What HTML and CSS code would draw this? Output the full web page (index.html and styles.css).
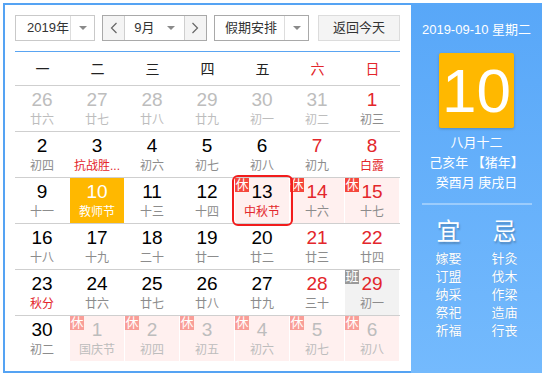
FILE: index.html
```html
<!DOCTYPE html>
<html lang="zh-CN">
<head>
<meta charset="utf-8">
<title>日历</title>
<link rel="stylesheet" href="styles.css">
</head>
<body>
<div class="cal">
  <div class="main">
    <div class="toolbar">
      <div class="sel year"><span class="val">2019年</span><span class="arr"><i class="tri"></i></span></div>
      <div class="month">
        <span class="nav"><svg width="8" height="12" viewBox="0 0 8 12"><polyline points="6.5,1 1.5,6 6.5,11" fill="none" stroke="#666" stroke-width="1.2"/></svg></span>
        <span class="mid"><span class="val">9月</span><span class="arr"><i class="tri"></i></span></span>
        <span class="nav"><svg width="8" height="12" viewBox="0 0 8 12"><polyline points="1.5,1 6.5,6 1.5,11" fill="none" stroke="#666" stroke-width="1.2"/></svg></span>
      </div>
      <div class="sel hol"><span class="val">假期安排</span><span class="arr"><i class="tri"></i></span></div>
      <div class="today">返回今天</div>
    </div>
    <div class="rule"></div>
    <div class="week">
      <span>一</span><span>二</span><span>三</span><span>四</span><span>五</span><span class="red">六</span><span class="red">日</span>
    </div>
    <div class="row">
      <div class="cell other"><b>26</b><i>廿六</i></div>
      <div class="cell other"><b>27</b><i>廿七</i></div>
      <div class="cell other"><b>28</b><i>廿八</i></div>
      <div class="cell other"><b>29</b><i>廿九</i></div>
      <div class="cell other"><b>30</b><i>初一</i></div>
      <div class="cell other"><b>31</b><i>初二</i></div>
      <div class="cell wk"><b>1</b><i>初三</i></div>
    </div>
    <div class="row">
      <div class="cell"><b>2</b><i>初四</i></div>
      <div class="cell"><b>3</b><i class="fest">抗战胜...</i></div>
      <div class="cell"><b>4</b><i>初六</i></div>
      <div class="cell"><b>5</b><i>初七</i></div>
      <div class="cell"><b>6</b><i>初八</i></div>
      <div class="cell wk"><b>7</b><i>初九</i></div>
      <div class="cell wk"><b>8</b><i class="fest">白露</i></div>
    </div>
    <div class="row">
      <div class="cell"><b>9</b><i>十一</i></div>
      <div class="cell today-cell"><b>10</b><i>教师节</i></div>
      <div class="cell"><b>11</b><i>十三</i></div>
      <div class="cell"><b>12</b><i>十四</i></div>
      <div class="cell rest picked"><span class="badge">休</span><b>13</b><i class="fest">中秋节</i></div>
      <div class="cell rest wk"><span class="badge">休</span><b>14</b><i>十六</i></div>
      <div class="cell rest wk"><span class="badge">休</span><b>15</b><i>十七</i></div>
    </div>
    <div class="row">
      <div class="cell"><b>16</b><i>十八</i></div>
      <div class="cell"><b>17</b><i>十九</i></div>
      <div class="cell"><b>18</b><i>二十</i></div>
      <div class="cell"><b>19</b><i>廿一</i></div>
      <div class="cell"><b>20</b><i>廿二</i></div>
      <div class="cell wk"><b>21</b><i>廿三</i></div>
      <div class="cell wk"><b>22</b><i>廿四</i></div>
    </div>
    <div class="row">
      <div class="cell"><b>23</b><i class="fest">秋分</i></div>
      <div class="cell"><b>24</b><i>廿六</i></div>
      <div class="cell"><b>25</b><i>廿七</i></div>
      <div class="cell"><b>26</b><i>廿八</i></div>
      <div class="cell"><b>27</b><i>廿九</i></div>
      <div class="cell wk"><b>28</b><i>三十</i></div>
      <div class="cell work wk"><span class="badge gray">班</span><b>29</b><i>初一</i></div>
    </div>
    <div class="row last">
      <div class="cell"><b>30</b><i>初二</i></div>
      <div class="cell rest other"><span class="badge">休</span><b>1</b><i>国庆节</i></div>
      <div class="cell rest other"><span class="badge">休</span><b>2</b><i>初四</i></div>
      <div class="cell rest other"><span class="badge">休</span><b>3</b><i>初五</i></div>
      <div class="cell rest other"><span class="badge">休</span><b>4</b><i>初六</i></div>
      <div class="cell rest other"><span class="badge">休</span><b>5</b><i>初七</i></div>
      <div class="cell rest other"><span class="badge">休</span><b>6</b><i>初八</i></div>
    </div>
  </div>
  <aside class="side">
    <div class="date">2019-09-10 星期二</div>
    <div class="big">10</div>
    <div class="lunar">八月十二</div>
    <div class="lunar">己亥年 【猪年】</div>
    <div class="lunar">癸酉月 庚戌日</div>
    <div class="sep"></div>
    <div class="yiji">
      <div class="col">
        <div class="head">宜</div>
        <div>嫁娶</div><div>订盟</div><div>纳采</div><div>祭祀</div><div>祈福</div>
      </div>
      <div class="col">
        <div class="head">忌</div>
        <div>针灸</div><div>伐木</div><div>作梁</div><div>造庙</div><div>行丧</div>
      </div>
    </div>
  </aside>
</div>
</body>
</html>
```
FILE: styles.css
```css
html, body {
  margin: 0;
  padding: 0;
  background: #fff;
}
body {
  font-family: "Liberation Sans", "Noto Sans CJK SC", sans-serif;
  color: #333;
}
.cal {
  margin: 3px;
  width: 539px;
  height: 370px;
  box-sizing: border-box;
  border: 2px solid #55a3f3;
  display: flex;
}
.main {
  width: 406px;
  box-sizing: border-box;
  padding: 10px 11px 10px 10px;
  background: #fff;
}
.toolbar {
  display: flex;
  height: 26px;
  font-size: 13px;
  color: #333;
}
.sel {
  display: flex;
  box-sizing: border-box;
  height: 26px;
  border: 1px solid #c9c9c9;
  background: #fff;
}
.sel .val, .mid .val {
  flex: 1;
  display: flex;
  align-items: center;
  padding-left: 11px;
  line-height: 24px;
}
.sel .arr, .mid .arr {
  width: 24px;
  box-sizing: border-box;
  border-left: 1px solid #ddd;
  display: flex;
  align-items: center;
  justify-content: center;
}
.mid .arr {
  border-left: 0;
  width: 26px;
}
.tri {
  display: block;
  width: 0;
  height: 0;
  border-left: 4px solid transparent;
  border-right: 4px solid transparent;
  border-top: 4px solid #8a8a8a;
}
.year { width: 80px; }
.month {
  margin-left: 7px;
  width: 105px;
  height: 26px;
  box-sizing: border-box;
  border: 1px solid #a9a9a9;
  display: flex;
}
.nav {
  width: 22px;
  background: #f4f4f4;
  display: flex;
  align-items: center;
  justify-content: center;
}
.mid {
  width: 60px;
  display: flex;
  border-left: 1px solid #cfcfcf;
  border-right: 1px solid #cfcfcf;
  background: #fff;
}
.mid .val { padding-left: 9px; }
.hol {
  margin-left: 7px;
  width: 95px;
  border-color: #a9a9a9;
}
.hol .val { padding-left: 10px; }
.today {
  margin-left: 9px;
  width: 82px;
  box-sizing: border-box;
  border: 1px solid #dcdcdc;
  background: #f4f4f4;
  text-align: center;
  line-height: 24px;
}
.rule {
  margin-top: 10px;
  height: 1px;
  background: #5aa5f2;
}
.week {
  display: grid;
  grid-template-columns: repeat(7, 55px);
  height: 34px;
  box-sizing: border-box;
  border-bottom: 1px solid #cfcfcf;
  align-items: center;
  text-align: center;
  font-size: 14px;
  color: #222;
  line-height: 16px;
  padding-top: 1px;
}
.week .red { color: #e3262b; }
.row {
  display: grid;
  grid-template-columns: repeat(7, 55px);
  height: 46px;
  box-sizing: border-box;
  border-bottom: 1px solid #cfcfcf;
}
.row.last {
  height: 45px;
  border-bottom: 0;
}
.cell {
  position: relative;
  box-sizing: border-box;
  border-right: 1px solid transparent;
  background-clip: padding-box;
  text-align: center;
}
.cell b {
  display: block;
  font-weight: normal;
  font-size: 19px;
  line-height: 20px;
  padding-top: 4px;
  color: #000;
  font-family: "Liberation Sans", sans-serif;
}
.cell i {
  display: block;
  font-style: normal;
  font-size: 12px;
  line-height: 14px;
  margin-top: 3px;
  color: #8c8c8c;
  white-space: nowrap;
}
.cell i.fest { color: #e3262b; }
.cell.wk b { color: #e3262b; }
.cell.other b, .cell.other i { color: #bdbdbd; }
.cell.rest { background-color: #fff0ef; }
.cell.work { background-color: #f2f2f2; }
.today-cell { background-color: #ffb800; }
.today-cell b, .today-cell i { color: #fff; }
.picked {
  outline: 2px solid #f21c1c;
  outline-offset: 1px;
  border-radius: 3px;
  z-index: 1;
}
.badge {
  position: absolute;
  left: 0;
  top: 0;
  width: 14px;
  height: 14px;
  font-size: 13px;
  line-height: 14px;
  text-align: center;
  color: #fff;
  background: #f5473c;
}
.cell.other .badge { background: #f99e98; }
.badge.gray { background: #9a9a9a; }
.side {
  flex: 1;
  margin-top: -2px;
  margin-bottom: -2px;
  margin-right: -2px;
  background: linear-gradient(#58a7f8, #74bafd);
  color: #fff;
  text-align: center;
  padding-top: 17px;
  display: flex;
  flex-direction: column;
  align-items: center;
}
.date {
  font-size: 13px;
  line-height: 20px;
}
.big {
  margin-top: 13px;
  width: 75px;
  height: 75px;
  background: #ffb800;
  border-radius: 2px;
  box-shadow: 0 1px 3px rgba(0, 0, 0, 0.2);
  font-size: 62px;
  line-height: 75px;
  font-family: "Liberation Sans", sans-serif;
}
.lunar {
  font-size: 13px;
  line-height: 20px;
}
.big + .lunar { margin-top: 5px; }
.sep {
  margin-top: 10px;
  width: 110px;
  height: 2px;
  background: rgba(255, 255, 255, 0.35);
}
.yiji {
  display: flex;
  margin-top: 12px;
}
.col {
  width: 56px;
  font-size: 13px;
  line-height: 18px;
  text-shadow: 0 0 1px rgba(0, 0, 0, 0.15);
}
.col .head {
  font-size: 24px;
  line-height: 30px;
  margin-bottom: 3px;
  text-shadow: 1px 2px 2px rgba(0, 0, 0, 0.25);
}
```
